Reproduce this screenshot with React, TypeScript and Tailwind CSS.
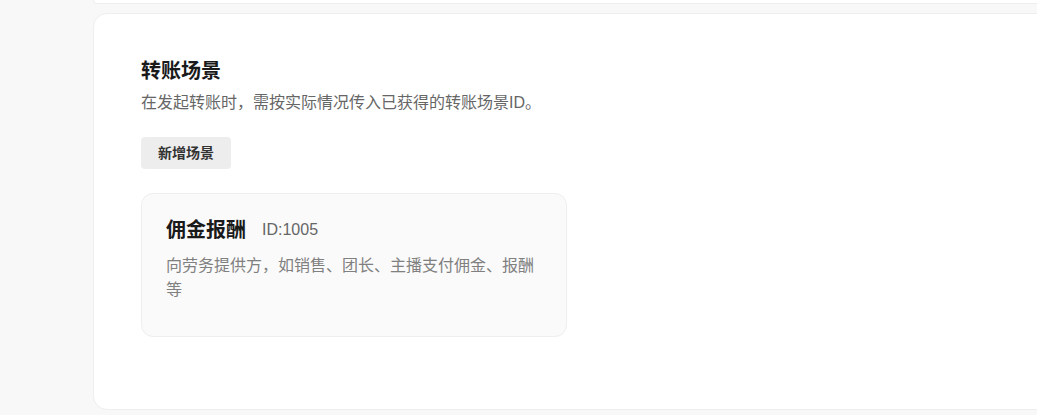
export default function App() {
  return (
    <div
      className="h-[415px] w-full overflow-hidden bg-[#f8f8f8]"
      style={{ fontFamily: '"Liberation Sans", "Noto Sans CJK SC", sans-serif' }}
    >
      <div className="ml-[93px] w-[1000px]">
        <div className="h-[4px] rounded-b-[6px] border-x border-b border-[#eeeeee] bg-white" />
        <div className="mt-[9px] h-[397px] rounded-[14px] border border-[#eeeeee] bg-white pl-[47px] pt-[43px]">
          <h2 className="text-[20px] font-bold leading-[28px] text-[#1a1a1a]">
            转账场景
          </h2>
          <p className="mt-[6px] text-[16px] leading-[24px] text-[#666666]">
            在发起转账时，需按实际情况传入已获得的转账场景ID。
          </p>
          <button className="mt-[22px] h-[32px] w-[90px] rounded-[4px] bg-[#ededed] text-[14px] font-bold text-[#333333]">
            新增场景
          </button>
          <div className="mt-[24px] h-[144px] w-[426px] rounded-[12px] border border-[#eeeeee] bg-[#fafafa] px-[24px] pt-[22px]">
            <div className="flex items-center">
              <span className="text-[20px] font-bold leading-[28px] text-[#1a1a1a]">
                佣金报酬
              </span>
              <span className="ml-[16px] text-[16px] leading-[28px] text-[#666666]">
                ID:1005
              </span>
            </div>
            <p className="mt-[10px] text-[16px] leading-[24px] text-[#808080]">
              向劳务提供方，如销售、团长、主播支付佣金、报酬等
            </p>
          </div>
        </div>
      </div>
    </div>
  );
}
